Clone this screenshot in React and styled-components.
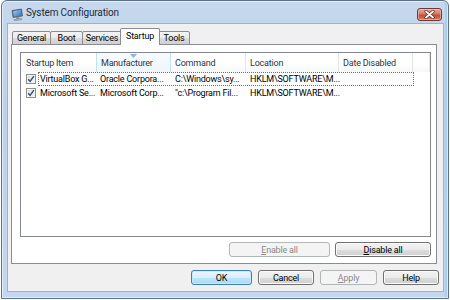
import React from "react";
import styled, { createGlobalStyle } from "styled-components";

const GlobalStyle = createGlobalStyle`
	html, body {
		margin: 0;
		padding: 0;
		background: #ffffff;
	}
	body {
		font-family: Roboto, "Noto Sans", sans-serif;
		font-size: 9px;
		letter-spacing: -0.2px;
		color: #000;
	}
	* {
		box-sizing: border-box;
	}
`;

const Page = styled.div`
	padding-left: 1px;
	width: 450px;
	height: 300px;
`;

const Window = styled.div`
	width: 448px;
	height: 299px;
	border: 1px solid #5d7189;
	border-radius: 6px 6px 0 0;
	background: linear-gradient(to bottom, #c5d8ec 0%, #bcd2ea 40%, #c3d8ee 100%);
	box-shadow: inset 0 0 0 1px rgba(255, 255, 255, 0.55), inset -3px 0 0 #a9cdef;
	padding: 0 4px 6px 5px;
	display: flex;
	flex-direction: column;
`;

const TitleBar = styled.div`
	height: 22px;
	display: flex;
	align-items: flex-start;
	padding-left: 4px;
`;

const TitleIcon = styled.svg`
	margin-top: 7px;
	width: 13px;
	height: 13px;
	flex: none;
`;

const TitleText = styled.div`
	margin-top: 6px;
	margin-left: 2px;
	font-size: 10px;
	letter-spacing: -0.15px;
	color: #1e2b3c;
	flex: 1;
`;

const CloseButton = styled.div`
	margin-top: 7px;
	margin-right: 2px;
	width: 25px;
	height: 13px;
	border: 1px solid #6d3b34;
	border-radius: 3px;
	background: linear-gradient(to bottom, #e8a596 0%, #d67a69 45%, #c24c38 55%, #d27d6b 100%);
	box-shadow: inset 0 0 0 1px rgba(255, 210, 200, 0.5);
	display: flex;
	align-items: center;
	justify-content: center;
`;

const Client = styled.div`
	flex: 1;
	background: #f0f0f0;
	border: 1px solid #9db3cc;
	display: flex;
	flex-direction: column;
	padding: 4px 4px 6px 3px;
`;

const TabStrip = styled.div`
	display: flex;
	align-items: flex-end;
	height: 17px;
	padding-left: 1px;
	margin-bottom: -1px;
	position: relative;
	z-index: 1;
`;

const Tab = styled.div`
	height: ${p => (p.$active ? 17 : 14)}px;
	width: ${p => p.$w}px;
	margin: ${p => (p.$active ? "0 -2px 0 -1px" : "0 -1px 0 0")};
	border: 1px solid #898c95;
	border-bottom: ${p => (p.$active ? "none" : "1px solid #898c95")};
	border-radius: 2px 2px 0 0;
	background: ${p =>
		p.$active
			? "#ffffff"
			: "linear-gradient(to bottom, #f3f3f3 0%, #ebebeb 50%, #dddddd 51%, #cfcfcf 100%)"};
	position: relative;
	z-index: ${p => (p.$active ? 2 : 1)};
	display: flex;
	align-items: ${p => (p.$active ? "flex-start" : "center")};
	justify-content: center;
	padding-top: ${p => (p.$active ? "2px" : "0")};
	color: #000;
	white-space: nowrap;
`;

const Panel = styled.div`
	flex: 1;
	background: #ffffff;
	border: 1px solid #898c95;
	padding: 7px 5px 6px 8px;
	display: flex;
	flex-direction: column;
	margin: 0 2px 6px 0;
`;

const ListView = styled.div`
	flex: 1;
	border: 1px solid #828790;
	display: flex;
	flex-direction: column;
	overflow: hidden;
`;

const HeaderRow = styled.div`
	display: flex;
	height: 19px;
`;

const HeaderCell = styled.div`
	position: relative;
	width: ${p => p.$w}px;
	flex: ${p => (p.$fill ? "1" : "none")};
	padding-left: ${p => (p.$pad !== undefined ? p.$pad : 4)}px;
	display: flex;
	align-items: center;
	white-space: nowrap;
	overflow: hidden;
	color: #2c3642;
	background: ${p =>
		p.$sorted
			? "linear-gradient(to bottom, #f6fbfe 0%, #eef7fc 100%)"
			: "linear-gradient(to bottom, #ffffff 0%, #ffffff 55%, #f6f7f8 100%)"};
	border-right: 1px solid ${p => (p.$sorted ? "#bfe0f5" : "#e3e5e8")};
	border-left: ${p => (p.$sorted ? "1px solid #bfe0f5" : "none")};
	margin-left: ${p => (p.$sorted ? "-1px" : "0")};
`;

const SortArrow = styled.svg`
	position: absolute;
	top: 1px;
	left: 50%;
	margin-left: -4px;
	width: 7px;
	height: 4px;
`;

const Row = styled.div`
	display: flex;
	height: 14px;
	align-items: stretch;
`;

const CheckCell = styled.div`
	width: 16px;
	flex: none;
	display: flex;
	align-items: center;
	padding-left: 5px;
`;

const RowBody = styled.div`
	display: flex;
	width: 376px;
	border: 1px dotted ${p => (p.$focused ? "#6f6f6f" : "transparent")};
	margin-left: 1px;
`;

const Cell = styled.div`
	width: ${p => p.$w}px;
	flex: none;
	padding-left: ${p => (p.$pad !== undefined ? p.$pad : 3)}px;
	display: flex;
	align-items: center;
	white-space: nowrap;
	overflow: hidden;
`;

const Check = styled.div`
	width: 10px;
	height: 10px;
	border: 1px solid #8e8f8f;
	background: linear-gradient(135deg, #dcdcdc 0%, #f6f6f6 100%);
	box-shadow: inset 0 0 0 1px #f4f4f4;
	display: flex;
	align-items: center;
	justify-content: center;
`;

const ButtonRow = styled.div`
	display: flex;
	justify-content: flex-end;
	gap: ${p => p.$gap}px;
	padding-right: ${p => p.$right || 0}px;
	margin-top: ${p => p.$top || 0}px;
`;

const Button = styled.div`
	width: ${p => p.$w}px;
	height: 15px;
	border-radius: 3px;
	display: flex;
	align-items: center;
	justify-content: center;
	border: 1px solid ${p => (p.$disabled ? "#b1b6b9" : p.$default ? "#3c7fb1" : "#707070")};
	color: ${p => (p.$disabled ? "#8a8a8a" : "#000")};
	background: ${p =>
		p.$disabled
			? "#f4f4f4"
			: p.$default
			? "linear-gradient(to bottom, #eaf6fd 0%, #d9f0fc 50%, #bee6fd 51%, #a7d9f5 100%)"
			: "linear-gradient(to bottom, #f2f2f2 0%, #ebebeb 50%, #dddddd 51%, #cfcfcf 100%)"};
	box-shadow: ${p =>
		p.$disabled ? "none" : p.$default ? "inset 0 0 0 1px #c7ebfc" : "inset 0 0 0 1px #fbfbfb"};
`;

const Key = styled.span`
	text-decoration: underline;
`;

const MonitorIcon = () => (
	<TitleIcon viewBox="0 0 13 13">
		<defs>
			<linearGradient id="scr" x1="0" y1="0" x2="1" y2="1">
				<stop offset="0" stopColor="#9fd0fb" />
				<stop offset="1" stopColor="#2d6fc4" />
			</linearGradient>
		</defs>
		<path d="M1 2.5 L10.5 1 L11.5 8 L2 9.5 Z" fill="#6a7585" stroke="#3e4654" strokeWidth="0.6" />
		<path d="M2.2 3.3 L9.7 2.1 L10.4 7.3 L2.9 8.5 Z" fill="url(#scr)" />
		<path d="M5 9.2 L8 8.7 L8.6 10.6 L5.2 11.2 Z" fill="#8b95a3" />
		<path d="M3 11.6 L10.5 10.4 L11 11.6 L3.4 12.7 Z" fill="#b9c1cb" stroke="#5b6573" strokeWidth="0.4" />
	</TitleIcon>
);

const CheckMark = () => (
	<svg width="8" height="8" viewBox="0 0 8 8">
		<path d="M1.2 4.2 L3.1 6.4 L6.9 1.2" fill="none" stroke="#2f4d8a" strokeWidth="1.4" />
	</svg>
);

const columns = [
	{ label: "Startup Item", w: 76, pad: 5 },
	{ label: "Manufacturer", w: 75, sorted: true },
	{ label: "Command", w: 75 },
	{ label: "Location", w: 93 },
	{ label: "Date Disabled", w: 74 },
];

const items = [
	{
		name: "VirtualBox G...",
		maker: "Oracle Corpora...",
		command: "C:\\Windows\\sy...",
		location: "HKLM\\SOFTWARE\\M...",
		focused: true,
	},
	{
		name: "Microsoft Se...",
		maker: "Microsoft Corp...",
		command: "\"c:\\Program Fil...",
		location: "HKLM\\SOFTWARE\\M...",
	},
];

const tabs = [
	{ label: "General", w: 39 },
	{ label: "Boot", w: 33 },
	{ label: "Services", w: 40 },
	{ label: "Startup", w: 40, active: true },
	{ label: "Tools", w: 32 },
];

export default function App() {
	return (
		<Page>
			<GlobalStyle />
			<Window>
				<TitleBar>
					<MonitorIcon />
					<TitleText>System Configuration</TitleText>
					<CloseButton>
						<svg width="11" height="9" viewBox="0 0 11 9">
							<path d="M2 1.5 L9 7.5 M9 1.5 L2 7.5" stroke="#5a2a24" strokeWidth="3.2" strokeLinecap="round" />
							<path d="M2 1.5 L9 7.5 M9 1.5 L2 7.5" stroke="#ffffff" strokeWidth="1.8" strokeLinecap="round" />
						</svg>
					</CloseButton>
				</TitleBar>
				<Client>
					<TabStrip>
						{tabs.map(t => (
							<Tab key={t.label} $w={t.w} $active={t.active}>
								{t.label}
							</Tab>
						))}
					</TabStrip>
					<Panel>
						<ListView>
							<HeaderRow>
								{columns.map(c => (
									<HeaderCell key={c.label} $w={c.w} $pad={c.pad} $sorted={c.sorted}>
										{c.sorted && (
											<SortArrow viewBox="0 0 7 4">
												<path d="M0 0 L7 0 L3.5 4 Z" fill="#8fb4d9" />
											</SortArrow>
										)}
										{c.label}
									</HeaderCell>
								))}
								<HeaderCell $fill $pad={0} />
							</HeaderRow>
							{items.map(it => (
								<Row key={it.name}>
									<CheckCell>
										<Check>
											<CheckMark />
										</Check>
									</CheckCell>
									<RowBody $focused={it.focused}>
										<Cell $w={58} $pad={1}>{it.name}</Cell>
										<Cell $w={75}>{it.maker}</Cell>
										<Cell $w={75}>{it.command}</Cell>
										<Cell $w={94}>{it.location}</Cell>
										<Cell $w={72} />
									</RowBody>
								</Row>
							))}
						</ListView>
						<ButtonRow $gap={5} $top={5}>
							<Button $w={101} $disabled>
								<span>
									<Key>E</Key>nable all
								</span>
							</Button>
							<Button $w={96}>
								<span>
									<Key>D</Key>isable all
								</span>
							</Button>
						</ButtonRow>
					</Panel>
					<ButtonRow $gap={6} $right={0}>
						<Button $w={61} $default>
							OK
						</Button>
						<Button $w={56}>Cancel</Button>
						<Button $w={57} $disabled>
							<span>
								<Key>A</Key>pply
							</span>
						</Button>
						<Button $w={56}>Help</Button>
					</ButtonRow>
				</Client>
			</Window>
		</Page>
	);
}
